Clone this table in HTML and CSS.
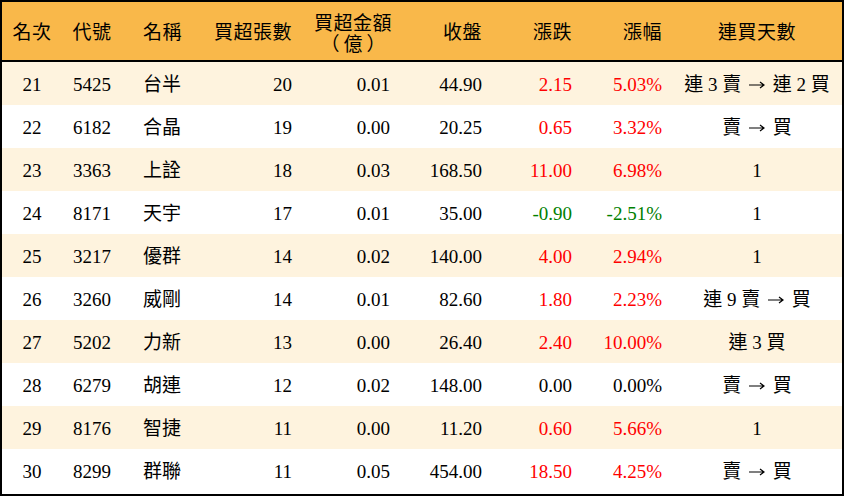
FILE: index.html
```html
<!DOCTYPE html>
<html lang="zh-Hant">
<head>
<meta charset="utf-8">
<title>買超排行</title>
<link rel="stylesheet" href="styles.css">
</head>
<body>
<div class="board">
<table class="rank">
  <colgroup>
    <col class="w-rank"><col class="w-code"><col class="w-name"><col class="w-vol"><col class="w-amt"><col class="w-close"><col class="w-chg"><col class="w-pct"><col class="w-days">
  </colgroup>
  <thead>
    <tr>
      <th class="c">名次</th>
      <th class="c">代號</th>
      <th class="l">名稱</th>
      <th class="r">買超張數</th>
      <th class="r th-two"><span class="two">買超金額<br><span class="unit">（億）</span></span></th>
      <th class="r">收盤</th>
      <th class="r">漲跌</th>
      <th class="r">漲幅</th>
      <th class="c">連買天數</th>
    </tr>
  </thead>
  <tbody>
    <tr class="odd"><td class="c">21</td><td class="c">5425</td><td class="l">台半</td><td class="r">20</td><td class="r">0.01</td><td class="r">44.90</td><td class="r up">2.15</td><td class="r up">5.03%</td><td class="c">連 3 賣 <svg class="arrow" viewBox="0 0 16 10" aria-label="→"><path d="M0 5H15M11 2L15 5L11 8"/></svg> 連 2 買</td></tr>
    <tr><td class="c">22</td><td class="c">6182</td><td class="l">合晶</td><td class="r">19</td><td class="r">0.00</td><td class="r">20.25</td><td class="r up">0.65</td><td class="r up">3.32%</td><td class="c">賣 <svg class="arrow" viewBox="0 0 16 10" aria-label="→"><path d="M0 5H15M11 2L15 5L11 8"/></svg> 買</td></tr>
    <tr class="odd"><td class="c">23</td><td class="c">3363</td><td class="l">上詮</td><td class="r">18</td><td class="r">0.03</td><td class="r">168.50</td><td class="r up">11.00</td><td class="r up">6.98%</td><td class="c">1</td></tr>
    <tr><td class="c">24</td><td class="c">8171</td><td class="l">天宇</td><td class="r">17</td><td class="r">0.01</td><td class="r">35.00</td><td class="r down">-0.90</td><td class="r down">-2.51%</td><td class="c">1</td></tr>
    <tr class="odd"><td class="c">25</td><td class="c">3217</td><td class="l">優群</td><td class="r">14</td><td class="r">0.02</td><td class="r">140.00</td><td class="r up">4.00</td><td class="r up">2.94%</td><td class="c">1</td></tr>
    <tr><td class="c">26</td><td class="c">3260</td><td class="l">威剛</td><td class="r">14</td><td class="r">0.01</td><td class="r">82.60</td><td class="r up">1.80</td><td class="r up">2.23%</td><td class="c">連 9 賣 <svg class="arrow" viewBox="0 0 16 10" aria-label="→"><path d="M0 5H15M11 2L15 5L11 8"/></svg> 買</td></tr>
    <tr class="odd"><td class="c">27</td><td class="c">5202</td><td class="l">力新</td><td class="r">13</td><td class="r">0.00</td><td class="r">26.40</td><td class="r up">2.40</td><td class="r up">10.00%</td><td class="c">連 3 買</td></tr>
    <tr><td class="c">28</td><td class="c">6279</td><td class="l">胡連</td><td class="r">12</td><td class="r">0.02</td><td class="r">148.00</td><td class="r">0.00</td><td class="r">0.00%</td><td class="c">賣 <svg class="arrow" viewBox="0 0 16 10" aria-label="→"><path d="M0 5H15M11 2L15 5L11 8"/></svg> 買</td></tr>
    <tr class="odd"><td class="c">29</td><td class="c">8176</td><td class="l">智捷</td><td class="r">11</td><td class="r">0.00</td><td class="r">11.20</td><td class="r up">0.60</td><td class="r up">5.66%</td><td class="c">1</td></tr>
    <tr><td class="c">30</td><td class="c">8299</td><td class="l">群聯</td><td class="r">11</td><td class="r">0.05</td><td class="r">454.00</td><td class="r up">18.50</td><td class="r up">4.25%</td><td class="c">賣 <svg class="arrow" viewBox="0 0 16 10" aria-label="→"><path d="M0 5H15M11 2L15 5L11 8"/></svg> 買</td></tr>
  </tbody>
</table>
</div>
</body>
</html>
```

FILE: styles.css
```css
* { box-sizing: border-box; }
html, body { margin: 0; padding: 0; background: #fff; }

.board {
  width: 844px;
  height: 496px;
  border: 2px solid #000;
  background: #fff;
  overflow: hidden;
}

.rank {
  width: 840px;
  table-layout: fixed;
  border-collapse: separate;
  border-spacing: 0;
  font-family: "Liberation Serif", "Noto Sans CJK TC", serif;
  font-size: 19px;
  color: #000;
}

.w-rank { width: 60px; }
.w-code { width: 60px; }
.w-name { width: 78px; }
.w-vol { width: 102px; }
.w-amt { width: 98px; }
.w-close { width: 92px; }
.w-chg { width: 90px; }
.w-pct { width: 90px; }
.w-days { width: 170px; }

.rank th {
  height: 60px;
  padding: 0;
  padding-top: 2px;
  background: #f9b84a;
  border-bottom: 2px solid #000;
  font-weight: normal;
  line-height: 21px;
  vertical-align: middle;
  letter-spacing: 0.5px;
}

.rank th.th-two {
  vertical-align: top;
  padding-top: 11px;
}

.rank td {
  height: 43px;
  padding: 0;
  line-height: 20px;
  vertical-align: middle;
  white-space: nowrap;
  padding-top: 2px;
}

.rank tr.odd td { background: #fef3de; }

.c { text-align: center; }
.l { text-align: left; padding-left: 21px !important; }
.r { text-align: right; padding-right: 10px !important; }

.two {
  display: inline-block;
  vertical-align: top;
  text-align: center;
  margin-right: -2px;
}

.unit { letter-spacing: 4px; margin-right: -4px; }

.arrow {
  width: 16px;
  height: 10px;
  margin: 0 3px;
  vertical-align: 1px;
  fill: none;
  stroke: #000;
  stroke-width: 1.2;
}

.up { color: #ff0000; }
.down { color: #008000; }
```
